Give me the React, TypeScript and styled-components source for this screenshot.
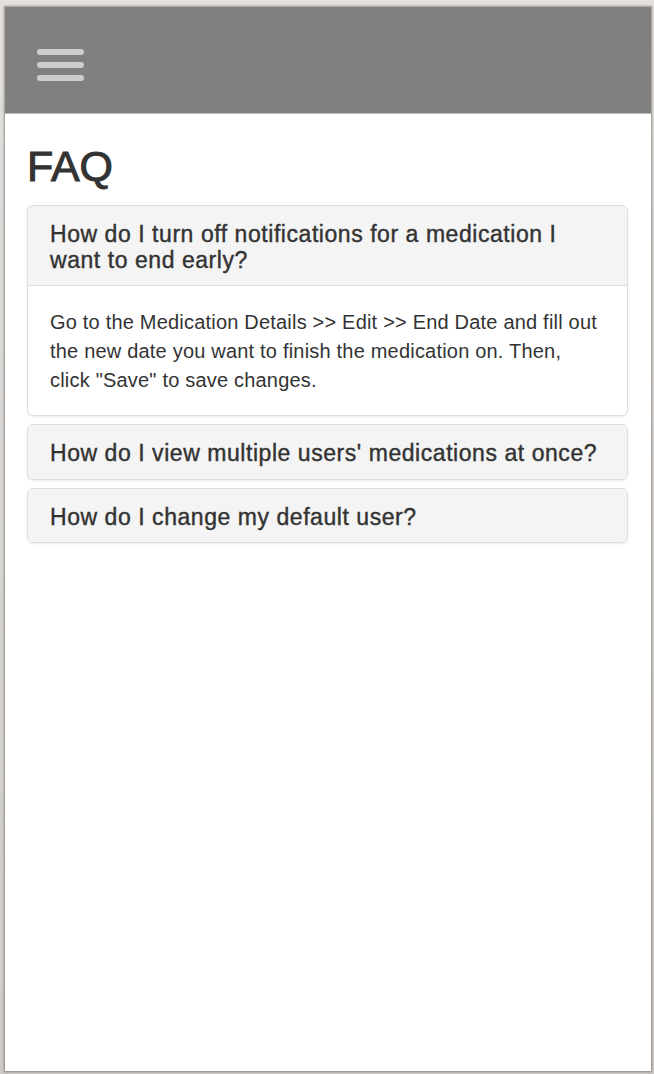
import React from "react";
import styled, { createGlobalStyle } from "styled-components";

const Global = createGlobalStyle`
  html, body { margin: 0; padding: 0; }
  body {
    background: linear-gradient(#e2dfdc, #cfcbc8);
    font-family: "Liberation Sans", Arial, sans-serif;
    color: #333;
  }
`;

const Frame = styled.div`
  height: 1074px;
  box-sizing: border-box;
  padding: 7px 3px 3px 5px;
`;

const Window = styled.div`
  height: 100%;
  background: #fff;
  box-shadow: 0 0 2px 1px rgba(0, 0, 0, 0.35);
  overflow: hidden;
  display: flex;
  flex-direction: column;
`;

const Header = styled.header`
  height: 107px;
  box-sizing: border-box;
  flex: 0 0 auto;
  background: #808080;
  border-bottom: 1px solid #b9b9b9;
  display: flex;
  align-items: flex-start;
  padding: 42px 0 0 32px;
`;

const MenuButton = styled.div`
  display: flex;
  flex-direction: column;
  gap: 7px;
`;

const Bar = styled.span`
  display: block;
  width: 47px;
  height: 6px;
  border-radius: 3px;
  background: #cdcdcd;
`;

const Content = styled.main`
  padding: 0 23px 0 22px;
`;

const Title = styled.h2`
  font-size: 43px;
  font-weight: 400;
  line-height: 47px;
  margin: 29px 0 15px;
  color: #333;
  -webkit-text-stroke: 1px #333;
`;

const Group = styled.div`
  display: flex;
  flex-direction: column;
  gap: 8px;
`;

const Panel = styled.div`
  border: 1px solid #dddddd;
  border-radius: 6px;
  background: #fff;
  box-shadow: 0 1px 2px rgba(0, 0, 0, 0.08);
  overflow: hidden;
`;

const PanelHeading = styled.div<{ $open?: boolean }>`
  background: #f4f4f4;
  padding: 16px 21px 12px 22px;
  border-bottom: ${(p) => (p.$open ? "1px solid #dddddd" : "none")};
`;

const PanelTitle = styled.h4`
  margin: 0;
  font-size: 23px;
  font-weight: 400;
  line-height: 25.5px;
  letter-spacing: 0.55px;
  color: #333;
  -webkit-text-stroke: 0.4px #333;
`;

const PanelBody = styled.div`
  padding: 22px 21px 20px 22px;
  font-size: 20px;
  line-height: 29px;
  letter-spacing: 0.2px;
  color: #333;
`;

const faqs = [
  {
    q: "How do I turn off notifications for a medication I want to end early?",
    a: 'Go to the Medication Details >> Edit >> End Date and fill out the new date you want to finish the medication on. Then, click "Save" to save changes.',
  },
  { q: "How do I view multiple users' medications at once?" },
  { q: "How do I change my default user?" },
];

export default function App() {
  return (
    <>
      <Global />
      <Frame>
        <Window>
          <Header>
            <MenuButton>
              <Bar />
              <Bar />
              <Bar />
            </MenuButton>
          </Header>
          <Content>
            <Title>FAQ</Title>
            <Group>
              {faqs.map((f) => (
                <Panel key={f.q}>
                  <PanelHeading $open={!!f.a}>
                    <PanelTitle>{f.q}</PanelTitle>
                  </PanelHeading>
                  {f.a && <PanelBody>{f.a}</PanelBody>}
                </Panel>
              ))}
            </Group>
          </Content>
        </Window>
      </Frame>
    </>
  );
}
